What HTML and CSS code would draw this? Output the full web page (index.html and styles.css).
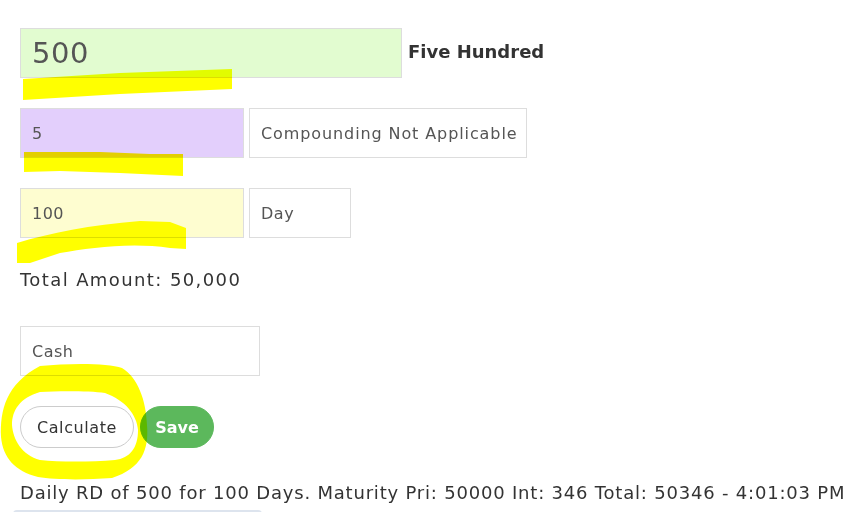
FILE: index.html
```html
<!DOCTYPE html>
<html>
<head>
<meta charset="utf-8">
<link rel="stylesheet" href="styles.css">
</head>
<body>
<div class="page">
  <div class="row row-amount">
    <div class="field field-green field-lg">500</div>
    <div class="words">Five Hundred</div>
  </div>
  <div class="row">
    <div class="field field-violet field-sm">5</div>
    <div class="field addon addon-wide">Compounding Not Applicable</div>
  </div>
  <div class="row">
    <div class="field field-yellow field-sm">100</div>
    <div class="field addon addon-narrow">Day</div>
  </div>
  <div class="total">Total Amount: 50,000</div>
  <div class="field field-cash">Cash</div>
  <div class="buttons">
    <button class="btn btn-calc">Calculate</button>
    <button class="btn btn-save">Save</button>
  </div>
  <div class="result">Daily RD of 500 for 100 Days. Maturity Pri: 50000 Int: 346 Total: 50346 - 4:01:03 PM</div>
  <div class="strip"></div>
</div>
<svg class="marker" width="856" height="512" viewBox="0 0 856 512">
  <path d="M23,79 L120,73 L232,69 L232,89 L120,94 L23,100 Z"/>
  <path d="M24,152 L100,152 L150,154 L183,154 L183,176 L120,173 L60,171 L24,172 Z"/>
  <path d="M17,243 C50,233 90,225 140,221 L170,222 L186,228 L186,249 L170,248 C130,242 90,248 60,253 L30,263 L17,263 Z"/>
  <path fill-rule="evenodd" d="M40,366 C70,363 108,363 122,368 C138,378 146,400 147,425 C149,450 142,468 112,478 C85,480 55,480 38,477 C15,471 3,458 1,437 C0,410 6,384 40,366 Z M40,392 C60,391 90,391 105,393 C125,400 137,415 138,430 C138,448 130,458 115,460 C90,462 60,462 40,460 C22,455 13,440 12,425 C12,410 20,398 40,392 Z"/>
</svg>
</body>
</html>
```
FILE: styles.css
```css
body {
  margin: 0;
  background: #ffffff;
  font-family: "DejaVu Sans", "Liberation Sans", sans-serif;
  color: #333333;
}
.page {
  padding: 28px 0 0 20px;
  display: flex;
  flex-direction: column;
  align-items: flex-start;
}
.row {
  display: flex;
  align-items: center;
  gap: 5px;
  margin-bottom: 30px;
}
.row-amount {
  gap: 6px;
}
.field {
  box-sizing: border-box;
  height: 50px;
  border: 1px solid #dddddd;
  display: flex;
  align-items: center;
  padding-left: 11px;
  color: #555555;
  font-size: 16px;
  letter-spacing: 0.5px;
  background: #ffffff;
}
.field-lg {
  width: 382px;
  font-size: 29px;
  letter-spacing: 0.5px;
}
.field-sm {
  width: 224px;
}
.field-green { background: #e2fcd0; }
.field-violet { background: #e3cffc; }
.field-yellow { background: #fefdd0; }
.addon-wide {
  width: 278px;
  letter-spacing: 0.9px;
}
.addon-narrow { width: 102px; }
.words {
  font-weight: bold;
  font-size: 18px;
  color: #333333;
  margin-top: -4px;
}
.total {
  font-size: 18px;
  letter-spacing: 1.4px;
  line-height: 27px;
  margin-top: -2px;
  color: #333333;
}
.field-cash {
  width: 240px;
  margin-top: 33px;
}
.buttons {
  display: flex;
  gap: 6px;
  margin-top: 30px;
}
.btn {
  height: 42px;
  border-radius: 21px;
  font-family: "DejaVu Sans", "Liberation Sans", sans-serif;
  font-size: 16px;
  padding: 0;
  cursor: pointer;
}
.btn-calc {
  width: 114px;
  background: #ffffff;
  border: 1px solid #cccccc;
  color: #333333;
  letter-spacing: 0.6px;
}
.btn-save {
  width: 74px;
  background: #5cb85c;
  border: 1px solid #5cb85c;
  color: #ffffff;
  font-weight: bold;
  font-size: 16px;
}
.result {
  font-size: 18px;
  letter-spacing: 0.8px;
  line-height: 27px;
  margin-top: 31px;
  color: #333333;
  white-space: nowrap;
}
.strip {
  width: 249px;
  height: 10px;
  margin-left: -7px;
  margin-top: 4px;
  background: #dde4ee;
  border-radius: 4px 4px 0 0;
}
.marker {
  position: absolute;
  left: 0;
  top: 0;
  pointer-events: none;
  mix-blend-mode: multiply;
  fill: #ffff00;
}
```
